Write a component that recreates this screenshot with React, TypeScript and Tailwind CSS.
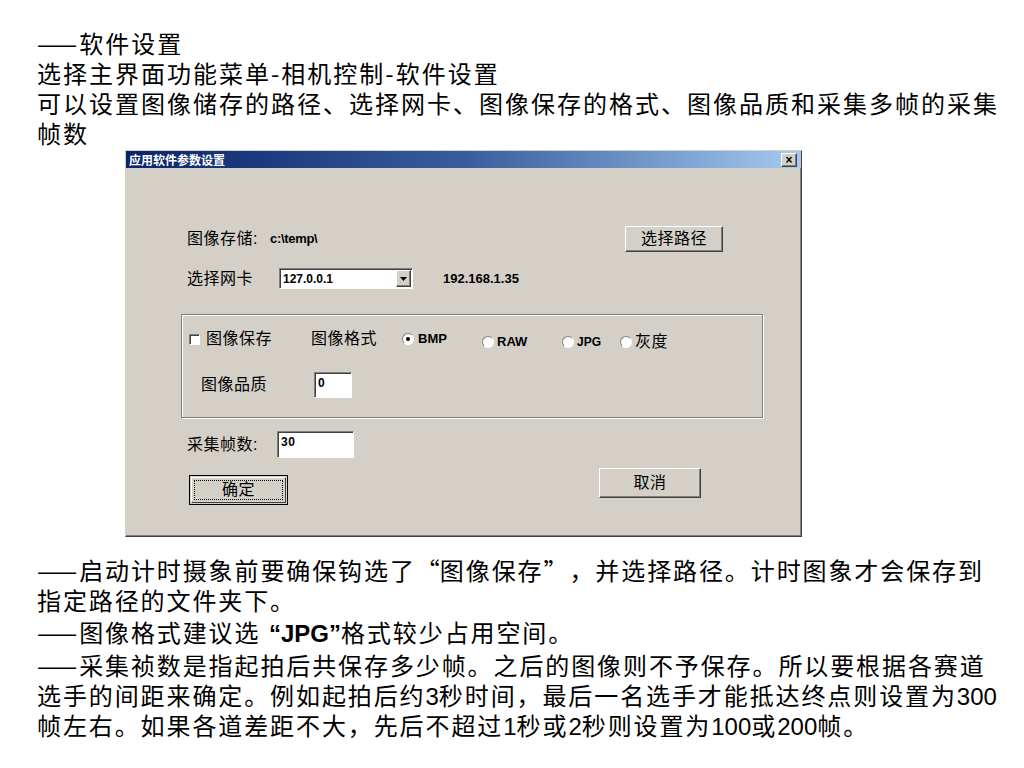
import React from "react";

const raised =
  "border border-t-white border-l-white border-r-[#404040] border-b-[#404040] shadow-[inset_-1px_-1px_0_#808080] bg-[#d4d0c8]";
const sunken =
  "border border-t-[#808080] border-l-[#808080] border-r-white border-b-white shadow-[inset_1px_1px_0_#404040] bg-white";
const cjk = "font-['Noto_Sans_CJK_SC',sans-serif]";
const narrow = "font-['Liberation_Sans_Narrow','Liberation_Sans',sans-serif] tracking-normal";

function Radio({ checked }: { checked?: boolean }) {
  return (
    <span className="relative inline-block w-[12px] h-[12px] rounded-full bg-white border border-t-[#808080] border-l-[#808080] border-r-white border-b-white shrink-0">
      {checked && (
        <span className="absolute left-[3px] top-[3px] w-[4px] h-[4px] rounded-full bg-black" />
      )}
    </span>
  );
}

function N({ children }: { children: React.ReactNode }) {
  return <span className={narrow}>{children}</span>;
}

export default function App() {
  return (
    <div className="w-[1024px] h-[768px] bg-white text-black font-['Liberation_Sans','Noto_Sans_CJK_SC',sans-serif] overflow-hidden">
      {/* top text */}
      <div className="pl-[37px] pt-[28px] text-[24px] leading-[30px] tracking-[2px] whitespace-nowrap font-['Noto_Sans_CJK_SC',sans-serif]">
        <div>——软件设置</div>
        <div>选择主界面功能菜单-相机控制-软件设置</div>
        <div>可以设置图像储存的路径、选择网卡、图像保存的格式、图像品质和采集多帧的采集</div>
        <div>帧数</div>
      </div>

      {/* dialog */}
      <div className="ml-[125px] mt-[2px] w-[677px] h-[387px] flex flex-col border border-t-[#d4d0c8] border-l-[#d4d0c8] border-r-[#404040] border-b-[#404040] shadow-[inset_-1px_-1px_0_#808080] bg-[#d4d0c8]">
        <div className="h-[17px] flex items-center justify-between pl-[3px] pr-[4px] bg-linear-to-r from-[#0a246a] via-[#3a5c9c] to-[#a6caf0]">
          <span className="text-[12px] leading-none font-bold text-white font-['Noto_Sans_CJK_SC',sans-serif]">
            应用软件参数设置
          </span>
          <span className={`${raised} w-[16px] h-[14px] flex items-center justify-center text-[12px] leading-none font-bold`}>
            ×
          </span>
        </div>

        <div className="flex-1 flex flex-col text-[16px] tracking-[0.5px]">
          {/* row 1 */}
          <div className="mt-[58px] h-[26px] flex items-center pl-[61px] pr-[78px]">
            <span>图像存储:</span>
            <span className="ml-[12px] text-[13px] font-bold tracking-[-0.3px]">c:\temp\</span>
            <button className={`${raised} ml-auto w-[98px] h-[26px] flex items-center justify-center text-[16px]`}>
              选择路径
            </button>
          </div>

          {/* row 2 */}
          <div className="mt-[16px] h-[21px] flex items-center pl-[61px]">
            <span className="w-[92px]">选择网卡</span>
            <div className={`${sunken} w-[134px] h-[21px] flex items-center tracking-normal`}>
              <span className="flex-1 pl-[3px] text-[12px] font-bold leading-none">127.0.0.1</span>
              <span className={`${raised} w-[15px] h-[17px] mr-[1px] flex items-center justify-center`}>
                <svg width="7" height="4" viewBox="0 0 7 4">
                  <path d="M0 0h7L3.5 4z" fill="#000" />
                </svg>
              </span>
            </div>
            <span className="ml-[30px] text-[13px] font-bold tracking-normal">192.168.1.35</span>
          </div>

          {/* group box */}
          <div className="mt-[25px] ml-[55px] w-[582px] h-[104px] border border-[#808080] shadow-[inset_1px_1px_0_#fff,1px_1px_0_#fff] flex flex-col">
            <div className="mt-[12px] h-[24px] flex items-center pl-[7px]">
              <div className="w-[122px] flex items-center">
                <span className={`${sunken} w-[11px] h-[11px]`} />
                <span className="ml-[6px]">图像保存</span>
              </div>
              <span className="w-[91px]">图像格式</span>
              <div className="w-[80px] flex items-center tracking-normal">
                <Radio checked />
                <span className="ml-[4px] text-[13px] font-bold">BMP</span>
              </div>
              <div className="w-[80px] flex items-center mt-[5px] tracking-normal">
                <Radio />
                <span className="ml-[3px] text-[13px] font-bold">RAW</span>
              </div>
              <div className="w-[58px] flex items-center mt-[5px] tracking-normal">
                <Radio />
                <span className="ml-[3px] text-[12px] font-bold">JPG</span>
              </div>
              <div className="flex items-center mt-[5px]">
                <Radio />
                <span className="ml-[3px]">灰度</span>
              </div>
            </div>
            <div className="mt-[21px] h-[26px] flex items-center pl-[19px]">
              <span className="w-[113px]">图像品质</span>
              <div className={`${sunken} w-[38px] h-[26px] pl-[3px] text-[12px] font-bold leading-[20px]`}>0</div>
            </div>
          </div>

          {/* frames */}
          <div className="mt-[13px] h-[27px] flex items-center pl-[61px]">
            <span className="w-[90px]">采集帧数:</span>
            <div className={`${sunken} w-[77px] h-[27px] pl-[3px] text-[12px] font-bold leading-[20px]`}>30</div>
          </div>

          {/* buttons */}
          <div className="mt-[10px] flex items-start pl-[63px] pr-[100px]">
            <button className="mt-[7px] w-[99px] h-[30px] border border-black bg-[#d4d0c8] p-[1px]">
              <span className="block w-full h-full border border-t-white border-l-white border-r-[#404040] border-b-[#404040] p-[2px]">
                <span className="flex w-full h-full items-center justify-center border border-dotted border-black text-[16px]">
                  确定
                </span>
              </span>
            </button>
            <button className={`${raised} ml-auto w-[102px] h-[30px] flex items-center justify-center text-[16px]`}>
              取消
            </button>
          </div>
        </div>
      </div>

      {/* bottom text */}
      <div className="pl-[37px] mt-[18px] text-[24px] leading-[30.2px] tracking-[1.9px] whitespace-nowrap">
        <div>
          <span className={cjk}>——</span>启动计时摄象前要确保钩选了
          <span className={`${cjk} inline-block w-[24px] text-right`}>“</span>图像保存
          <span className={`${cjk} inline-block w-[26px] text-left`}>”</span>，并选择路径。计时图象才会保存到
        </div>
        <div>指定路径的文件夹下。</div>
        <div>
          <span className={cjk}>——</span>图像格式建议选 <span className={`${narrow} font-bold`}>“JPG”</span>格式较少占用空间。
        </div>
        <div>
          <span className={cjk}>——</span>采集祯数是指起拍后共保存多少帧。之后的图像则不予保存。所以要根据各赛道
        </div>
        <div>
          选手的间距来确定。例如起拍后约<N>3</N>秒时间，最后一名选手才能抵达终点则设置为<N>300</N>
        </div>
        <div>
          帧左右。如果各道差距不大，先后不超过<N>1</N>秒或<N>2</N>秒则设置为<N>100</N>或<N>200</N>帧。
        </div>
      </div>
    </div>
  );
}
